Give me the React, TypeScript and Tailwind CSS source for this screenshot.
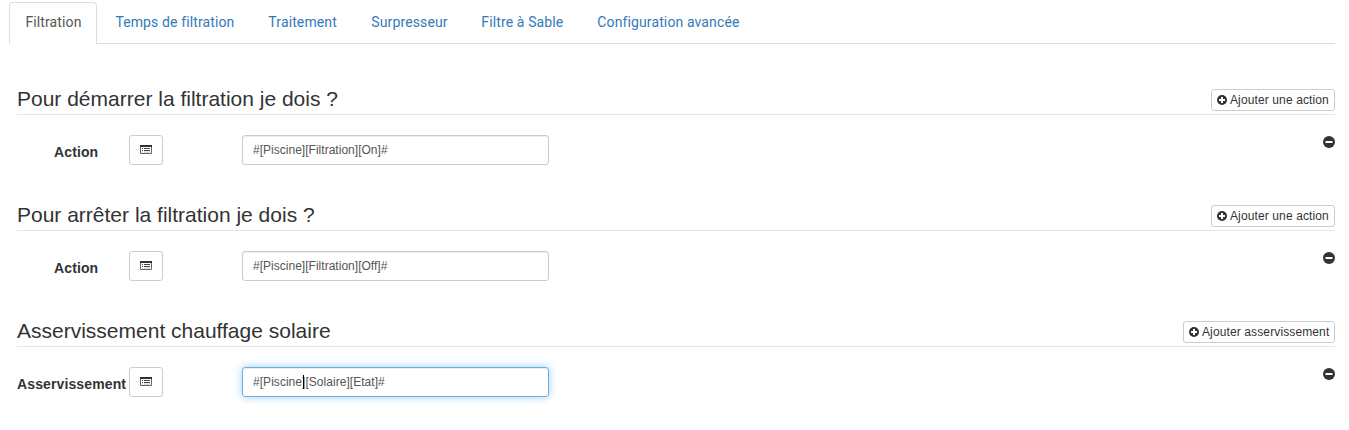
const tabs = [
  { label: 'Filtration', w: 'w-[56px]' },
  { label: 'Temps de filtration', w: 'w-[119px]' },
  { label: 'Traitement', w: 'w-[69px]' },
  { label: 'Surpresseur', w: 'w-[76px]' },
  { label: 'Filtre à Sable', w: 'w-[82px]' },
  { label: 'Configuration avancée', w: 'w-[142px]' },
];

function PlusCircle() {
  return (
    <svg className="mr-[3px] h-[10px] w-[10px] shrink-0" viewBox="0 0 10 10">
      <circle cx="5" cy="5" r="5" fill="#333" />
      <path d="M4 2h2v2h2v2H6v2H4V6H2V4h2z" fill="#fff" />
    </svg>
  );
}

function MinusCircle() {
  return (
    <svg className="mt-px h-[12px] w-[12px]" viewBox="0 0 12 12">
      <circle cx="6" cy="6" r="6" fill="#333" />
      <path d="M2.5 5h7v2h-7z" fill="#fff" />
    </svg>
  );
}

function ListIcon() {
  return (
    <svg className="-mt-px h-[9px] w-[12px]" viewBox="0 0 12 9">
      <path d="M.5 .5h11v8H.5z" fill="#fff" stroke="#666" />
      <path d="M0 0h12v2H0z" fill="#333" />
      <path d="M2 3.5h1M4 3.5h6M2 5.5h1M4 5.5h6" stroke="#444" />
      <path d="M2 7.1h1M4 7.1h6" stroke="#999" strokeWidth=".6" />
    </svg>
  );
}

type SectionProps = {
  title: string;
  button: string;
  buttonClass: string;
  label: string;
  labelClass: string;
  value: string;
  focused?: boolean;
};

function Section({ title, button, buttonClass, label, labelClass, value, focused }: SectionProps) {
  return (
    <section className="h-[116px] pl-[17px] pr-[14px]">
      <div className="flex h-[32px] items-start justify-between border-b border-[#e5e5e5]">
        <h2 className="mt-[4px] text-[21px] leading-[24px] text-[#333]">{title}</h2>
        <button className={`mt-[6px] flex h-[22px] items-center whitespace-nowrap rounded-[3px] border border-[#ccc] pl-[5px] text-[12px] leading-[18px] tracking-[0.12px] ${buttonClass}`}>
          <PlusCircle />
          {button}
        </button>
      </div>
      <div className="mt-[20px] flex h-[30px] items-start">
        <label className={`mt-[7px] w-[112px] whitespace-nowrap text-[14px] font-bold leading-[20px] tracking-[0.12px] ${labelClass}`}>{label}</label>
        <button className="flex h-[30px] w-[34px] items-center justify-center rounded-[3px] border border-[#ccc]">
          <ListIcon />
        </button>
        <div
          className={`relative ml-[79px] h-[30px] w-[307px] rounded-[3px] border pl-[10px] text-[12px] leading-[28px] text-[#555] ${
            focused
              ? 'border-[#66afe9] tracking-[0.04px] shadow-[inset_0_1px_1px_rgba(0,0,0,0.075),0_0_8px_rgba(102,175,233,0.6)]'
              : 'border-[#ccc] tracking-[0.02px] shadow-[inset_0_1px_1px_rgba(0,0,0,0.075)]'
          }`}
        >
          {value}
          {focused && <span className="absolute left-[60px] top-[7px] h-[14px] w-px bg-black" />}
        </div>
        <div className="ml-auto">
          <MinusCircle />
        </div>
      </div>
    </section>
  );
}

export default function App() {
  return (
    <main className="h-[430px] w-[1349px] overflow-hidden bg-white pt-[2px] font-['Liberation_Sans',Arial,sans-serif] text-[#333]">
      <nav className="ml-[9px] mr-[14px] flex h-[42px] border-b border-[#ddd] font-['Roboto',sans-serif] text-[14px] leading-[20px] tracking-[0.12px]">
        {tabs.map((t, i) => (
          <a
            key={t.label}
            className={
              i === 0
                ? 'mr-[2px] h-[42px] rounded-t-[4px] border border-b-0 border-[#ddd] bg-white pl-[15.4px] pr-[14.6px] pt-[9px] text-[#555]'
                : 'mr-[2px] h-[41px] pl-[16.4px] pr-[15.6px] pt-[10px] text-[#337ab7]'
            }
          >
            <span className={`block whitespace-nowrap ${t.w}`}>{t.label}</span>
          </a>
        ))}
      </nav>
      <div className="pt-[39px]">
        <Section title="Pour démarrer la filtration je dois ?" button="Ajouter une action" buttonClass="w-[124px]" label="Action" labelClass="pl-[37px]" value="#[Piscine][Filtration][On]#" />
        <Section title="Pour arrêter la filtration je dois ?" button="Ajouter une action" buttonClass="w-[124px]" label="Action" labelClass="pl-[37px]" value="#[Piscine][Filtration][Off]#" />
        <Section title="Asservissement chauffage solaire" button="Ajouter asservissement" buttonClass="w-[152px]" label="Asservissement" labelClass="" value="#[Piscine][Solaire][Etat]#" focused />
      </div>
    </main>
  );
}
